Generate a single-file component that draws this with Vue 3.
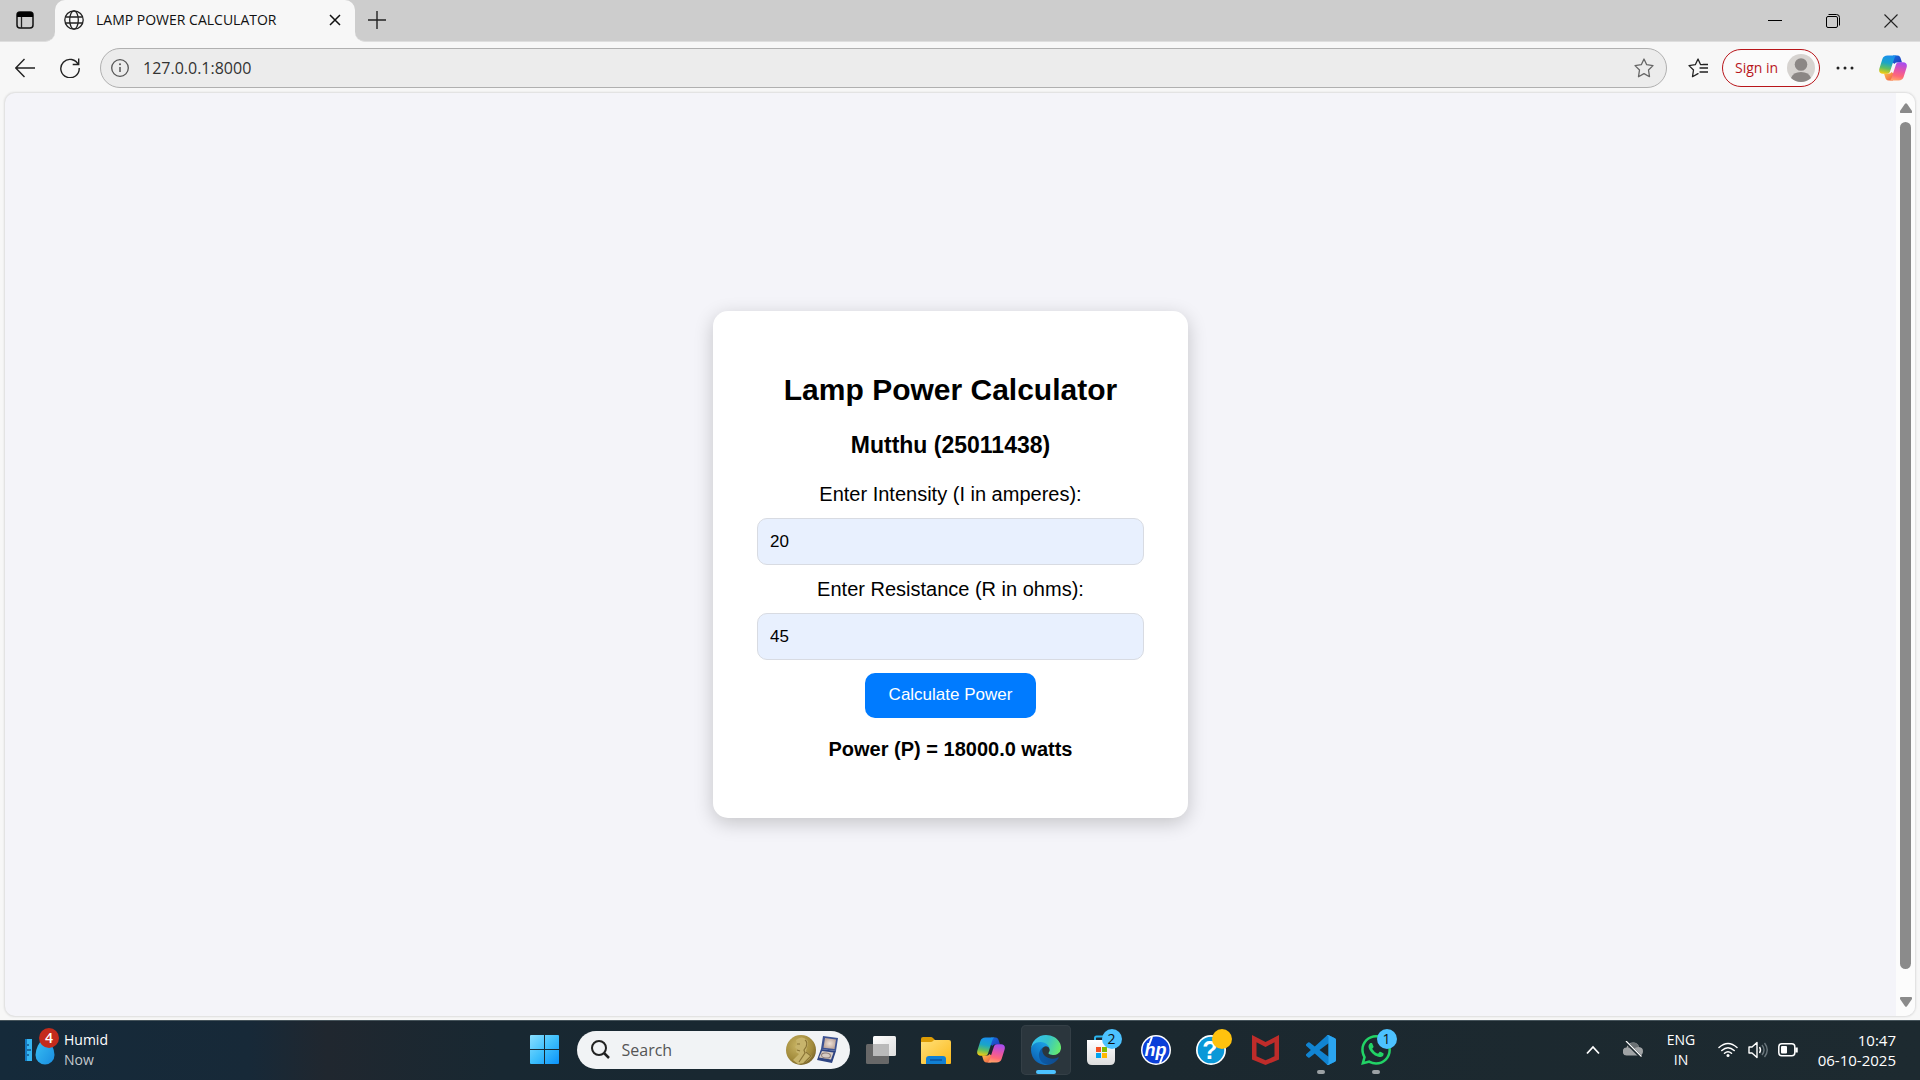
<script setup>
import { computed, ref } from 'vue'

const address = ref('127.0.0.1:8000')
const intensity = ref('20')
const resistance = ref('45')
const submitted = ref({ i: 20, r: 45 })
const power = computed(() => (submitted.value.i ** 2 * submitted.value.r).toFixed(1))

function calculate() {
  submitted.value = { i: Number(intensity.value), r: Number(resistance.value) }
}
</script>

<template>
  <div class="desktop">
    <svg class="symbols" aria-hidden="true">
      <defs>
        <linearGradient id="cp-left" x1="0.5" y1="0" x2="0.3" y2="1">
          <stop offset="0" stop-color="#1a8fee" />
          <stop offset="0.4" stop-color="#1aa5c8" />
          <stop offset="0.7" stop-color="#5fbf62" />
          <stop offset="1" stop-color="#f5cc10" />
        </linearGradient>
        <linearGradient id="cp-right" x1="0.6" y1="0" x2="0.4" y2="1">
          <stop offset="0" stop-color="#a64df0" />
          <stop offset="0.45" stop-color="#e655a8" />
          <stop offset="0.75" stop-color="#ff6878" />
          <stop offset="1" stop-color="#ffa26a" />
        </linearGradient>
        <linearGradient id="cp-fold-top" x1="0" y1="0" x2="1" y2="1">
          <stop offset="0" stop-color="#1270dc" />
          <stop offset="1" stop-color="#2638bd" />
        </linearGradient>
        <linearGradient id="cp-fold-bottom" x1="0" y1="0" x2="1" y2="1">
          <stop offset="0" stop-color="#ffc54a" />
          <stop offset="1" stop-color="#ee5548" />
        </linearGradient>
      </defs>
      <symbol id="copilot" viewBox="0 0 28 26">
        <path fill="url(#cp-fold-top)" d="M14 .5h4.500c2 0 2.800 1.300 3.400 3.500L23 7.500h-4.500c-1.500 0-2.400.3-3 1.500L13 7z" />
        <path fill="url(#cp-fold-bottom)" d="M14 25.500H9.500c-2 0-2.800-1.300-3.400-3.500L5 18.500h4.500c1.500 0 2.400-.3 3-1.500L15 19z" />
        <path fill="url(#cp-left)" d="M8.500.5h9.200c-1.300.4-1.900 1.500-2.400 3L11.200 16c-.5 1.700-1.600 2.700-3.400 2.700H4C.8 18.700-.5 16.500.4 13.500L3.300 4.300C4.100 1.700 5.800.5 8.500.5z" />
        <path fill="url(#cp-right)" d="M19.500 25.500h-9.200c1.300-.4 1.900-1.500 2.400-3L16.800 10c.5-1.700 1.600-2.700 3.400-2.700H24c3.200 0 4.500 2.200 3.600 5.200l-2.900 9.200c-.8 2.600-2.500 3.800-5.200 3.800z" />
      </symbol>
    </svg>

    <header class="titlebar">
      <div class="tab-actions">
        <button class="plain" aria-label="Tab actions">
          <svg width="18" height="18" viewBox="0 0 18 18" fill="none">
            <rect x="1" y="1" width="16" height="16" rx="3" stroke="#111" stroke-width="1.500" />
            <path d="M1 6V4a3 3 0 0 1 3-3h10a3 3 0 0 1 3 3v2z" fill="#000" />
            <path d="M5.500 6v11" stroke="#222" stroke-width="1.300" />
          </svg>
        </button>
      </div>
      <div class="tab-slot">
        <div class="tab">
          <svg width="20" height="20" viewBox="0 0 20 20" fill="none" stroke="#222" stroke-width="1.300">
            <circle cx="10" cy="10" r="9.200" />
            <ellipse cx="10" cy="10" rx="4.300" ry="9.200" />
            <path d="M1.500 7h17M1.500 13h17" />
          </svg>
          <span class="tab-title">LAMP POWER CALCULATOR</span>
          <button class="plain tab-close" aria-label="Close tab">
            <svg width="12" height="12" viewBox="0 0 12 12" stroke="#111" stroke-width="1.500"><path d="M1 1l10 10M11 1L1 11" /></svg>
          </button>
        </div>
      </div>
      <div class="title-rest">
        <button class="plain new-tab" aria-label="New tab">
          <svg width="18" height="18" viewBox="0 0 18 18" stroke="#222" stroke-width="1.400"><path d="M9 0v18M0 9h18" /></svg>
        </button>
        <div class="window-buttons">
          <button class="plain" aria-label="Minimize">
            <svg width="14" height="14" viewBox="0 0 14 14" stroke="#000"><path d="M0 6.500h14" /></svg>
          </button>
          <button class="plain" aria-label="Restore">
            <svg width="14" height="14" viewBox="0 0 14 14" fill="none" stroke="#000">
              <rect x=".5" y="2.500" width="11" height="11" rx="1.500" />
              <path d="M2.500 .5h8q3 0 3 3v8" />
            </svg>
          </button>
          <button class="plain" aria-label="Close">
            <svg width="14" height="14" viewBox="0 0 14 14" stroke="#222" stroke-width="1.100"><path d="M.5.5l13 13M13.500.5l-13 13" /></svg>
          </button>
        </div>
      </div>
    </header>

    <nav class="toolbar">
      <button class="plain nav-button" aria-label="Back">
        <svg width="20" height="20" viewBox="0 0 20 20" fill="none" stroke="#222" stroke-width="1.400"><path d="M20 10H1M9.500 1L.8 10l8.700 9" /></svg>
      </button>
      <button class="plain nav-button" aria-label="Refresh">
        <svg width="20" height="20" viewBox="0 0 20 20" fill="none" stroke="#222" stroke-width="1.400"><path d="M18.500 7A9.200 9.200 0 1 0 19.200 10M18.700.5V6.500h-6" /></svg>
      </button>
      <div class="address">
        <svg width="18" height="18" viewBox="0 0 18 18" fill="none" stroke="#555" stroke-width="1.300">
          <circle cx="9" cy="9" r="8.300" />
          <path d="M9 8v5" stroke-width="1.500" />
          <circle cx="9" cy="5.300" r="1" fill="#555" stroke="none" />
        </svg>
        <input v-model="address" class="address-input" type="text" aria-label="Address" />
        <button class="plain" aria-label="Add to favorites">
          <svg width="20" height="20" viewBox="0 0 20 20" fill="none" stroke="#666" stroke-width="1.300" stroke-linejoin="round">
            <path d="M10 1l2.700 5.700 6.300.9-4.500 4.400 1 6.700L10 15.600l-5.500 3.100 1-6.700L1 7.600l6.300-.9z" />
          </svg>
        </button>
      </div>
      <button class="plain favorites" aria-label="Favorites">
        <svg width="20" height="20" viewBox="0 0 20 20" fill="none" stroke="#222" stroke-width="1.300" stroke-linejoin="round" stroke-linecap="round">
          <path d="M14.500 6.700l-2-.2L10 1 7.300 6.700l-6.300.9L5.500 12l-1 6.700 5.500-3.100M12 10h8M12 14h8M15 6.500h5" />
        </svg>
      </button>
      <button class="sign-in">
        <span>Sign in</span>
        <svg width="28" height="28" viewBox="0 0 28 28">
          <circle cx="14" cy="14" r="14" fill="#d6d3d0" />
          <circle cx="14" cy="10.500" r="6.300" fill="#8b8785" />
          <path d="M4 24Q6 18 14 18t10 6Q19.500 28 14 28T4 24z" fill="#8b8785" />
        </svg>
      </button>
      <button class="plain more" aria-label="Settings and more">
        <svg width="18" height="4" viewBox="0 0 18 4" fill="#222"><circle cx="2" cy="2" r="1.500" /><circle cx="9" cy="2" r="1.500" /><circle cx="16" cy="2" r="1.500" /></svg>
      </button>
      <button class="plain copilot-button" aria-label="Copilot">
        <svg width="28" height="26"><use href="#copilot" /></svg>
      </button>
    </nav>

    <div class="viewport-frame">
      <main class="page">
        <form class="card" @submit.prevent="calculate">
          <h1>Lamp Power Calculator</h1>
          <h2>Mutthu (25011438)</h2>
          <label for="intensity">Enter Intensity (I in amperes):</label>
          <input id="intensity" v-model="intensity" type="text" />
          <label for="resistance">Enter Resistance (R in ohms):</label>
          <input id="resistance" v-model="resistance" type="text" />
          <button type="submit">Calculate Power</button>
          <output for="intensity resistance">Power (P) = {{ power }} watts</output>
        </form>
      </main>
      <div class="scrollbar" aria-hidden="true">
        <svg width="12" height="10" viewBox="0 0 12 10" fill="#8b8b8b"><path d="M5 .8Q6-.4 7 .8l5 7.200q.5 2-1 2H1q-1.500 0-1-2z" /></svg>
        <div class="thumb"></div>
        <svg width="12" height="10" viewBox="0 0 12 10" fill="#8b8b8b"><path d="M5 9.200q1 1.200 2 0l5-7.200q.5-2-1-2H1Q-.5 0 0 2z" /></svg>
      </div>
    </div>

    <footer class="taskbar">
      <button class="plain weather">
        <span class="weather-icon">
          <svg width="36" height="40" viewBox="0 0 36 40">
            <defs><linearGradient id="drop" x1="0" y1="0" x2="1" y2="1"><stop stop-color="#3cc4f5" /><stop offset="1" stop-color="#188ce0" /></linearGradient></defs>
            <rect x="1" y="12" width="7" height="22" fill="#36b6f2" />
            <path d="M1 12h2v22H1z" fill="#147bc4" />
            <path d="M3 18h2M3 23h4M3 28h2" stroke="#14578c" stroke-width="1.500" />
            <path d="M21 9q-9.500 10-9.500 19a9.500 9.500 0 0 0 19 0Q30.500 19 21 9z" fill="url(#drop)" />
          </svg>
          <span class="alert-count">4</span>
        </span>
        <span class="weather-text">Humid<small>Now</small></span>
      </button>

      <div class="apps">
        <button class="app" aria-label="Start">
          <svg width="30" height="30" viewBox="0 0 30 30">
            <defs><linearGradient id="win" x1="0" y1="0" x2="1" y2="1"><stop stop-color="#8adfff" /><stop offset="0.5" stop-color="#3fc0fc" /><stop offset="1" stop-color="#0a92fb" /></linearGradient></defs>
            <path fill="url(#win)" d="M1 0h13v14H0V1q0-1 1-1zM15 0h13q1 0 1 1v13H15zM0 15h14v14H1q-1 0-1-1zM15 15h14v13q0 1-1 1H15z" />
          </svg>
        </button>
        <div class="search">
          <svg width="19" height="19" viewBox="0 0 19 19" fill="none" stroke="#222" stroke-width="2"><circle cx="8" cy="8" r="7" /><path d="M13 13l5 5" stroke-width="2.500" /></svg>
          <input class="search-input" type="text" placeholder="Search" aria-label="Search" />
          <svg width="52" height="30" viewBox="0 0 52 30">
            <defs>
              <radialGradient id="gold" cx="0.4" cy="0.35" r="0.7"><stop stop-color="#c9b565" /><stop offset="0.7" stop-color="#a18a3b" /><stop offset="1" stop-color="#75602a" /></radialGradient>
              <radialGradient id="lid"><stop stop-color="#ede1d8" /><stop offset="1" stop-color="#c1a99d" /></radialGradient>
            </defs>
            <circle cx="15" cy="15" r="15" fill="url(#gold)" />
            <path d="M10 5q6-5 11 0 2 3 0 7l-1 4 6 5q-4 7-14 8l-5-4 6-6-3-2 1-3-2-2 2-2z" fill="#c7b46c" />
            <path d="M19 5q3 2 1 7l-2 3 1 3-6 9M20 17l5 4-7 7M11 9h3M11 15l3 1" stroke="#8a7435" stroke-width="1.200" fill="none" />
            <path d="M37 1l15 2-2 13-15-2z" fill="#3c5292" />
            <path d="M39 3l11 1.500-1.500 9.500-11-1.200z" fill="url(#lid)" />
            <path d="M35 14l15 2-4 12-15-3z" fill="#2d4382" />
            <path d="M36 16l11.500 1.500-2.500 7-12-2z" fill="#d6cbc4" />
            <ellipse cx="40" cy="20.500" rx="4.500" ry="2.500" fill="none" stroke="#8c7c78" transform="rotate(8 40 20.500)" />
          </svg>
        </div>
        <button class="app" aria-label="Task view">
          <svg width="30" height="28" viewBox="0 0 30 28">
            <defs><linearGradient id="pane" x1="0" y1="0" x2="1" y2="1"><stop stop-color="#fff" /><stop offset="1" stop-color="#ddd" /></linearGradient></defs>
            <rect y="8" width="23" height="20" rx="1.500" fill="#686868" />
            <rect x="7" width="23" height="20" rx="1.500" fill="url(#pane)" />
            <path d="M7 8h16v12H8q-1 0-1-1z" fill="#bababa" />
          </svg>
        </button>
        <button class="app" aria-label="File Explorer">
          <svg width="30" height="28" viewBox="0 0 30 28">
            <defs><linearGradient id="folder" x1="0" y1="0" x2="1" y2="1"><stop stop-color="#ffe07a" /><stop offset="1" stop-color="#fcb91a" /></linearGradient></defs>
            <path d="M0 3q0-2 2-2h8q1 0 2 1l2 2v5H0z" fill="#dd9c05" />
            <path d="M0 6h10q1 0 2-1l1-1h15q2 0 2 2v21q0 1-1 1H1q-1 0-1-1z" fill="url(#folder)" />
            <path d="M5 28v-5q0-3 3-3h14q3 0 3 3v5z" fill="#1180d4" />
            <path d="M9 24h12" stroke="#0b529e" stroke-width="1.500" />
          </svg>
        </button>
        <button class="app" aria-label="Copilot"><svg width="28" height="26"><use href="#copilot" /></svg></button>
        <button class="app active" aria-label="Microsoft Edge">
          <svg width="30" height="30" viewBox="0 0 256 256">
            <defs>
              <linearGradient id="edge-a" x1="0.2" y1="0.5" x2="1" y2="0.5"><stop stop-color="#0c59a4" /><stop offset="1" stop-color="#114a8b" /></linearGradient>
              <linearGradient id="edge-b" x1="0.8" y1="0.2" x2="0.3" y2="1"><stop stop-color="#1b9de2" /><stop offset="0.4" stop-color="#1484d1" /><stop offset="1" stop-color="#0d5fb0" /></linearGradient>
              <linearGradient id="edge-c" x1="0" y1="0.3" x2="1" y2="0.6"><stop stop-color="#35c1f1" /><stop offset="0.5" stop-color="#36c3cb" /><stop offset="1" stop-color="#66eb6e" /></linearGradient>
            </defs>
            <path fill="url(#edge-a)" d="M231 190.500c-3.400 1.800-6.900 3.400-10.500 4.700a101.500 101.500 0 0 1-35.900 6.500c-47.300 0-88.500-32.500-88.500-74.300 0-11.500 6.400-21.900 16.400-27.500-42.800 1.800-53.800 46.400-53.800 72.500 0 73.900 68.100 81.400 82.800 81.400 7.900 0 19.800-2.300 27-4.600l1.300-.4a128 128 0 0 0 66.600-52.800 4 4 0 0 0-5.400-5.500z" />
            <path fill="url(#edge-b)" d="M105.700 241.400a79.200 79.200 0 0 1-22.700-21.300 80.700 80.700 0 0 1 29.500-120c3.200-1.500 8.500-4.100 15.600-4a32.400 32.400 0 0 1 25.700 13 31.900 31.900 0 0 1 6.300 18.700c0-.2 24.500-79.600-80-79.600-43.900 0-80 41.600-80 78.200a130.200 130.200 0 0 0 12.100 56 128 128 0 0 0 156.400 67 75.500 75.500 0 0 1-62.800-8z" />
            <path fill="url(#edge-c)" d="M152.300 148.900c-.9 1-3.400 2.500-3.400 5.600 0 2.600 1.700 5.200 4.800 7.300 14.400 10.100 41.700 8.700 41.800 8.700 10.700 0 21.300-2.900 30.500-8.300A61.800 61.800 0 0 0 256.400 109c.3-22.400-8-37.300-11.300-43.900C223.900 23.500 178 0 128 0A128 128 0 0 0 0 126.200c.5-36.500 36.800-66 80-66 3.500 0 23.500.3 42 10.100 16.300 8.600 24.900 18.900 30.800 29.200 6.200 10.700 7.300 24.100 7.300 29.500s-2.700 13.300-7.800 19.900z" />
          </svg>
          <span class="running current"></span>
        </button>
        <button class="app" aria-label="Microsoft Store">
          <svg width="30" height="30" viewBox="0 0 30 30">
            <defs><linearGradient id="bag" x1="0" y1="0" x2="0" y2="1"><stop stop-color="#fff" /><stop offset="1" stop-color="#ddd" /></linearGradient></defs>
            <path d="M9 7V3q0-1.500 1.500-1.500h9Q21 1.500 21 3v4" fill="none" stroke="#2bb5ee" stroke-width="2" />
            <path d="M1 5h28v20q0 5-5 5H6q-5 0-5-5z" fill="url(#bag)" />
            <path d="M10 12h5v5h-5z" fill="#f25022" /><path d="M16 12h5v5h-5z" fill="#7fba00" />
            <path d="M10 18h5v5h-5z" fill="#00a4ef" /><path d="M16 18h5v5h-5z" fill="#ffb900" />
          </svg>
          <span class="badge">2</span>
        </button>
        <button class="app" aria-label="HP">
          <svg width="30" height="30" viewBox="0 0 30 30">
            <circle cx="15" cy="15" r="15" fill="#fff" /><circle cx="15" cy="15" r="13.500" fill="#0b3fd8" />
            <text x="14.500" y="20.500" text-anchor="middle" class="hp-text">hp</text>
            <path d="M11 2L8 10M19 28l3-8" stroke="#fff" stroke-width="2" />
          </svg>
        </button>
        <button class="app" aria-label="HP Support">
          <svg width="30" height="30" viewBox="0 0 30 30">
            <circle cx="15" cy="15" r="15" fill="#fff" /><circle cx="15" cy="15" r="13.300" fill="#0a98d8" />
            <text x="14" y="24" text-anchor="middle" class="help-text">?</text>
          </svg>
          <span class="badge amber"></span>
        </button>
        <button class="app" aria-label="McAfee">
          <svg width="27" height="30" viewBox="0 0 27 30">
            <path fill="#bf2c2a" fill-rule="evenodd" d="M0 0l13.500 7L27 0v24.500L13.500 30 0 24.500zM4.500 7.300v14l9 3.900 9-3.900v-14l-9 4.700z" />
          </svg>
        </button>
        <button class="app" aria-label="Visual Studio Code">
          <svg width="30" height="30" viewBox="0 0 24 24">
            <path fill="#1184d2" d="M23.150 2.587L18.210.21a1.494 1.494 0 0 0-1.705.29l-9.460 8.630-4.120-3.128a.999.999 0 0 0-1.276.057L.327 7.261A1 1 0 0 0 .326 8.740L3.899 12 .326 15.260a1 1 0 0 0 .001 1.479L1.650 17.940a.999.999 0 0 0 1.276.057l4.120-3.128 9.460 8.630a1.492 1.492 0 0 0 1.704.29l4.942-2.377A1.500 1.500 0 0 0 24 20.060V3.939a1.500 1.500 0 0 0-.85-1.352zm-5.146 14.861L10.826 12l7.178-5.448v10.896z" />
            <path fill="#2ba5f0" d="M18.200.2l4.950 2.387q.85.400.85 1.352V20.060q0 .95-.85 1.352L18.200 23.800q-.9.400-1.700-.3 1.500.3 1.500-1.300V1.800Q18 .2 16.500.5q.8-.7 1.700-.3z" />
          </svg>
          <span class="running"></span>
        </button>
        <button class="app" aria-label="WhatsApp">
          <svg width="30" height="30" viewBox="0 0 24 24">
            <path fill="#22d366" d="M17.472 14.382c-.297-.149-1.758-.867-2.030-.967-.273-.099-.471-.148-.670.150-.197.297-.767.966-.940 1.164-.173.199-.347.223-.644.075-.297-.150-1.255-.463-2.390-1.475-.883-.788-1.480-1.761-1.653-2.059-.173-.297-.018-.458.130-.606.134-.133.298-.347.446-.520.149-.174.198-.298.298-.497.099-.198.050-.371-.025-.520-.075-.149-.669-1.612-.916-2.207-.242-.579-.487-.500-.669-.510-.173-.008-.371-.010-.570-.010-.198 0-.520.074-.792.372-.272.297-1.040 1.016-1.040 2.479 0 1.462 1.065 2.875 1.213 3.074.149.198 2.096 3.200 5.077 4.487.709.306 1.262.489 1.694.625.712.227 1.360.195 1.871.118.571-.085 1.758-.719 2.006-1.413.248-.694.248-1.289.173-1.413-.074-.124-.272-.198-.570-.347m-5.421 7.403h-.004a9.870 9.870 0 0 1-5.031-1.378l-.361-.214-3.741.982.998-3.648-.235-.374a9.860 9.860 0 0 1-1.510-5.260c.001-5.450 4.436-9.884 9.888-9.884 2.640 0 5.122 1.030 6.988 2.898a9.825 9.825 0 0 1 2.893 6.994c-.003 5.450-4.437 9.884-9.885 9.884m8.413-18.297A11.815 11.815 0 0 0 12.050 0C5.495 0 .160 5.335.157 11.892c0 2.096.547 4.142 1.588 5.945L.057 24l6.305-1.654a11.882 11.882 0 0 0 5.683 1.448h.005c6.554 0 11.890-5.335 11.893-11.893a11.821 11.821 0 0 0-3.480-8.413z" />
          </svg>
          <span class="badge">1</span>
          <span class="running"></span>
        </button>
      </div>

      <div class="tray">
        <button class="plain" aria-label="Show hidden icons">
          <svg width="14" height="10" viewBox="0 0 14 10" fill="none" stroke="#fff" stroke-width="1.800"><path d="M1 8.500l6-6.500 6 6.500" /></svg>
        </button>
        <button class="plain cloud" aria-label="OneDrive, not signed in">
          <svg width="20" height="17" viewBox="0 0 20 17">
            <path d="M4 14.500a4 4 0 0 1-.5-8Q5 1.500 10 1.500q5 0 6 4.500 4 .5 4 4.300 0 4.200-4 4.200z" fill="#a0a3a5" />
            <path d="M5 7Q5.500 2 10.500 1.500 15 2 16 6q-4 0-6 3-2-2.500-5-2z" fill="#6c7275" />
            <path d="M2 0l16.500 16.500" stroke="#1d282e" stroke-width="3" />
            <path d="M3 0l15.500 15.500" stroke="#fff" stroke-width="1.200" />
          </svg>
        </button>
        <button class="plain tray-text language">ENG<br />IN</button>
        <button class="plain status" aria-label="Network, volume and battery">
          <svg width="20" height="16" viewBox="0 0 20 16" fill="none" stroke="#fff" stroke-width="1.500" stroke-linecap="round">
            <path d="M1 5.500q9-8 18 0M3.800 8.500q6.200-5.500 12.400 0M6.500 11.300q3.500-3 7 0" /><circle cx="10" cy="13.500" r="1.500" fill="#fff" stroke="none" />
          </svg>
          <svg width="20" height="18" viewBox="0 0 20 18" fill="none" stroke="#fff" stroke-width="1.400" stroke-linejoin="round">
            <path d="M1 6h3l5-4.500v15L4 12H1z" /><path d="M11.500 6q2 3 0 6" /><path d="M14 4q4 5 0 10M16.500 2q5.500 7 0 14" stroke="#69757b" />
          </svg>
          <svg width="20" height="14" viewBox="0 0 20 14" fill="none" stroke="#fff" stroke-width="1.500">
            <rect x=".8" y=".8" width="16" height="12" rx="3" /><rect x="3" y="3" width="6" height="7.500" rx="1" fill="#fff" stroke="none" /><path d="M18.500 4.500v5" stroke-width="2.500" />
          </svg>
        </button>
        <button class="plain tray-text clock">10:47<br />06-10-2025</button>
      </div>
    </footer>
  </div>
</template>

<style>
body {
  margin: 0;
}
</style>

<style scoped>
.desktop {
  --ui: "Open Sans", "Noto Sans", sans-serif;
  --chrome: #f7f7f7;
  --strip: #cdcdcd;
  box-sizing: border-box;
  display: flex;
  flex-direction: column;
  min-height: 100vh;
  background: var(--chrome);
  font-family: var(--ui);
}
.desktop * {
  box-sizing: border-box;
}
.symbols {
  position: absolute;
  width: 0;
  height: 0;
}
svg {
  display: block;
  flex: none;
}
.plain,
.app {
  display: flex;
  align-items: center;
  justify-content: center;
  padding: 0;
  border: 0;
  background: none;
  color: inherit;
  font-family: inherit;
}

/* Title strip */
.titlebar {
  display: flex;
  height: 42px;
}
.tab-actions {
  display: flex;
  align-items: center;
  width: 55px;
  padding: 0 0 2px 16px;
  background: var(--strip);
  border-bottom: 1px solid #dedede;
  border-bottom-right-radius: 10px;
}
.tab-slot {
  width: 300px;
  background: linear-gradient(var(--strip) 50%, var(--chrome) 50%);
}
.tab {
  display: flex;
  align-items: center;
  height: 100%;
  padding: 0 14px 2px 9px;
  background: var(--chrome);
  border-radius: 10px 10px 0 0;
}
.tab-title {
  flex: 1;
  margin-left: 12px;
  color: #111;
  font-size: 14px;
  line-height: 20px;
  white-space: nowrap;
}
.title-rest {
  display: flex;
  flex: 1;
  justify-content: space-between;
  align-items: center;
  padding: 0 0 2px 13px;
  background: var(--strip);
  border-bottom: 1px solid #dedede;
  border-bottom-left-radius: 10px;
}
.window-buttons {
  display: flex;
  padding-top: 3px;
}
.window-buttons .plain {
  width: 58px;
}

/* Toolbar */
.toolbar {
  display: flex;
  align-items: center;
  height: 51px;
  padding: 0 4px 0 2px;
}
.nav-button {
  width: 45px;
  height: 40px;
}
.address {
  display: flex;
  flex: 1;
  align-items: center;
  height: 40px;
  margin: 0 8px;
  padding: 0 12px 0 10px;
  background: #ececec;
  border: 1px solid #b0b0b0;
  border-radius: 20px;
}
.address-input {
  flex: 1;
  min-width: 0;
  margin-left: 14px;
  padding: 0;
  border: 0;
  outline: 0;
  background: none;
  color: #333;
  font-family: var(--ui);
  font-size: 16px;
  line-height: 24px;
}
.favorites {
  width: 46px;
  height: 40px;
}
.sign-in {
  display: flex;
  align-items: center;
  justify-content: space-between;
  width: 98px;
  height: 38px;
  margin-left: 1px;
  padding: 0 4px 0 12px;
  background: #fbfbfb;
  border: 1px solid #b8161b;
  border-radius: 19px;
  color: #b8161b;
  font-family: var(--ui);
  font-size: 14px;
  line-height: 20px;
  white-space: nowrap;
}
.more {
  width: 50px;
  height: 40px;
}
.copilot-button {
  width: 46px;
  height: 40px;
}

/* Web page */
.viewport-frame {
  display: flex;
  flex: 1;
  margin: 0 5px 4px;
  overflow: hidden;
  background: #f4f4f9;
  border-radius: 10px;
  box-shadow: 0 0 2px 1px #dcdcdc;
}
.page {
  display: flex;
  flex: 1;
  align-items: center;
  justify-content: center;
  padding-top: 20px;
  font-family: "Liberation Sans", Arial, sans-serif;
}
.card {
  display: flex;
  flex-direction: column;
  align-items: center;
  width: 475px;
  padding: 61px 44px 57px;
  background: #fff;
  border-radius: 15px;
  box-shadow: 0 5px 19px rgba(0, 0, 0, 0.2);
  color: #000;
  text-align: center;
}
.card h1 {
  margin: 0 0 23px;
  font-size: 30px;
  line-height: 36px;
}
.card h2 {
  margin: 0 0 23px;
  font-size: 23px;
  line-height: 28px;
}
.card label {
  font-size: 20px;
  line-height: 24px;
}
.card input {
  width: 100%;
  height: 47px;
  margin: 12px 0;
  padding: 0 12px;
  background: #e8f0fe;
  border: 1px solid #d8dbe2;
  border-radius: 10px;
  color: #000;
  font-family: inherit;
  font-size: 17px;
}
.card button {
  width: 171px;
  height: 45px;
  margin: 1px 0 19px;
  padding: 0 0 1px;
  background: #007bff;
  border: 0;
  border-radius: 10px;
  color: #fff;
  font-family: inherit;
  font-size: 17px;
}
.card output {
  font-size: 20px;
  font-weight: bold;
  line-height: 24px;
}
.scrollbar {
  display: flex;
  flex-direction: column;
  align-items: center;
  gap: 9px;
  width: 19px;
  padding: 10px 0 9px;
  background: #fcfcfc;
}
.scrollbar svg:last-child {
  margin-top: 19px;
}
.thumb {
  flex: 1;
  width: 11px;
  background: #8b8b8b;
  border-radius: 6px;
}

/* Taskbar */
.taskbar {
  display: grid;
  grid-template-columns: 1fr auto 1fr;
  align-items: center;
  height: 60px;
  padding-bottom: 2px;
  background: linear-gradient(90deg, #152a3a 0, #172938 13%, #20272f 17%, #182832 26%, #1b282f 60%, #1d2a30 100%);
  border-top: 1px solid #46545b;
  color: #fff;
}
.weather {
  justify-self: start;
  gap: 4px;
  padding-left: 24px;
}
.weather-icon,
.app {
  position: relative;
}
.weather-icon {
  padding-bottom: 6px;
}
.alert-count,
.badge {
  position: absolute;
  width: 20px;
  height: 20px;
  border-radius: 50%;
  text-align: center;
}
.alert-count {
  top: 1px;
  left: 15px;
  background: #c42b1c;
  color: #fff;
  font-size: 14px;
  font-weight: 600;
  line-height: 20px;
}
.weather-text {
  display: flex;
  flex-direction: column;
  font-size: 14px;
  line-height: 20px;
  text-align: left;
}
.weather-text small {
  color: #c3c8cc;
  font-size: 14px;
}
.apps {
  display: flex;
  align-items: center;
  gap: 5px;
}
.app {
  width: 50px;
  height: 50px;
  border-radius: 5px;
}
.app.active {
  background: #2b363d;
  box-shadow: inset 0 0 0 1px #343f46;
}
.badge {
  top: 4px;
  left: 26px;
  background: #4cc2ff;
  color: #111;
  font-size: 14px;
  line-height: 20px;
}
.badge.amber {
  background: #ffc20e;
}
.running {
  position: absolute;
  bottom: 1px;
  left: 21px;
  width: 8px;
  height: 4px;
  border-radius: 2px;
  background: #9ba1a4;
}
.running.current {
  left: 15px;
  width: 20px;
  background: #4cc2ff;
}
.search {
  display: flex;
  align-items: center;
  width: 273px;
  height: 38px;
  margin: 0 1px 0 2px;
  padding: 0 12px 0 14px;
  background: #f1f3f5;
  border-radius: 19px;
}
.search-input {
  flex: 1;
  min-width: 0;
  margin-left: 12px;
  padding: 0;
  border: 0;
  outline: 0;
  background: none;
  font-family: var(--ui);
  font-size: 16px;
  line-height: 24px;
}
.search-input::placeholder {
  color: #555;
  opacity: 1;
}
.hp-text {
  fill: #fff;
  font: italic bold 18px "Liberation Sans", sans-serif;
}
.help-text {
  fill: #fff;
  font: bold 25px "Liberation Sans", sans-serif;
}
.tray {
  display: flex;
  align-items: center;
  justify-self: end;
  padding-right: 24px;
}
.cloud {
  margin-left: 23px;
}
.tray-text {
  font-size: 14px;
  line-height: 20px;
}
.language {
  width: 36px;
  margin-left: 20px;
}
.status {
  gap: 10px;
  margin-left: 19px;
}
.clock {
  width: 80px;
  margin-left: 18px;
  justify-content: flex-end;
  font-size: 15px;
  text-align: right;
  white-space: nowrap;
}
</style>
